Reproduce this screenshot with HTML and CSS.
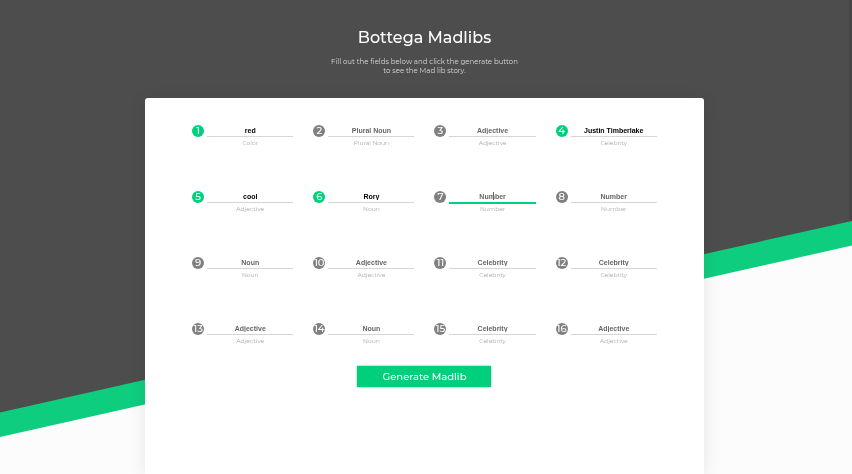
FILE: index.html
```
<!DOCTYPE html>
<html lang="en">
<head>
<meta charset="utf-8">
<title>Bottega Madlibs</title>
<link rel="stylesheet" href="styles.css">
</head>
<body>
<div class="backdrop" aria-hidden="true"><div class="band"></div><div class="slope"></div></div>
<div class="scrollbar" aria-hidden="true"></div>
<header class="intro">
  <h1>Bottega Madlibs</h1>
  <p>Fill out the fields below and click the generate button<br>to see the Mad lib story.</p>
</header>
<main>
<form class="card">
  <div class="fields" id="fields"></div>
  <button class="generate" type="button">Generate Madlib</button>
</form>
</main>
<script src="app.js"></script>
</body>
</html>
```
FILE: app.js
```
const fields = [
  ["Color", "red"], ["Plural Noun", ""], ["Adjective", ""], ["Celebrity", "Justin Timberlake"],
  ["Adjective", "cool"], ["Noun", "Rory"], ["Number", "", true], ["Number", ""],
  ["Noun", ""], ["Adjective", ""], ["Celebrity", ""], ["Celebrity", ""],
  ["Adjective", ""], ["Noun", ""], ["Celebrity", ""], ["Adjective", ""]
];

document.getElementById("fields").innerHTML = fields.map(([label, value, active], i) => `
  <div class="field${value ? " filled" : ""}${active ? " active" : ""}">
    <span class="number">${i + 1}</span>
    <div class="entry">
      <input id="field-${i + 1}" type="text" placeholder="${label}" value="${value}">
    </div>
    <label for="field-${i + 1}">${label}</label>
  </div>`).join("");
```
FILE: styles.css
```
* {
  box-sizing: border-box;
}

body {
  margin: 0;
  min-height: 100vh;
  padding-right: 3px;
  display: flex;
  flex-direction: column;
  background: #fcfcfc;
  font-family: Montserrat, "Noto Sans", sans-serif;
}

.backdrop {
  position: fixed;
  inset: 0;
  z-index: -1;
}

.band,
.slope {
  position: absolute;
  inset: 0;
}

.band {
  background: #0fcd7f;
  clip-path: polygon(0 0, 100% 0, 100% 51.8%, 0 92.2%);
}

.slope {
  background: #4d4d4d;
  clip-path: polygon(0 0, 100% 0, 100% 46.6%, 0 87%);
}

.scrollbar {
  position: fixed;
  inset: 0 0 auto auto;
  width: 3px;
  height: 46.6%;
  background: #464646;
}

.intro {
  padding-top: 26px;
  color: #fff;
  text-align: center;
}

h1 {
  margin: 0;
  font-size: 16px;
  line-height: 24px;
  font-weight: 500;
}

.intro p {
  margin: 7px 0 0;
  color: #d8d8d8;
  font-size: 7px;
  line-height: 9px;
}

main {
  flex: 1;
  display: flex;
  justify-content: center;
  margin-top: 23px;
}

.card {
  width: 65.8%;
  padding: 26px 47px 0;
  border-radius: 3px 3px 0 0;
  background: #fff;
  box-shadow: 0 3px 18px rgba(0, 0, 0, 0.09);
  text-align: center;
}

.fields {
  display: grid;
  grid-template-columns: repeat(4, 1fr);
  gap: 42px 20px;
}

.field {
  display: grid;
  grid-template-columns: 12px 1fr;
  gap: 1px 3px;
}

.number {
  display: flex;
  justify-content: center;
  align-items: center;
  width: 12px;
  height: 12px;
  margin-top: 1px;
  border-radius: 50%;
  background: #808080;
  color: #fff;
  font-size: 10px;
  line-height: 12px;
  font-weight: 500;
}

.filled .number {
  background: #00cf7b;
}

.entry {
  position: relative;
  height: 14px;
}

input {
  display: block;
  width: 100%;
  height: 13px;
  padding: 1px 0 0;
  border: 0;
  border-bottom: 1px solid #d6d6d6;
  outline: 0;
  background: none;
  color: #000;
  font: bold 7px/10px "Liberation Sans", sans-serif;
  text-align: center;
}

input::placeholder {
  color: #666;
  opacity: 1;
}

.active input {
  height: 14px;
  border-bottom: 2px solid #00cf7b;
}

.active .entry::after {
  content: "";
  position: absolute;
  left: 50%;
  top: 2px;
  width: 1px;
  height: 8px;
  background: #666;
}

label {
  grid-column: 2;
  color: #a8a8a8;
  font-size: 6px;
  line-height: 9px;
}

.generate {
  width: 134px;
  height: 21px;
  margin-top: 20px;
  padding: 0;
  border: 0;
  background: #00cf7b;
  box-shadow: 0 0 2px rgba(0, 0, 0, 0.4);
  color: #fff;
  font-family: inherit;
  font-size: 10px;
  line-height: 20px;
  font-weight: 500;
}
```
